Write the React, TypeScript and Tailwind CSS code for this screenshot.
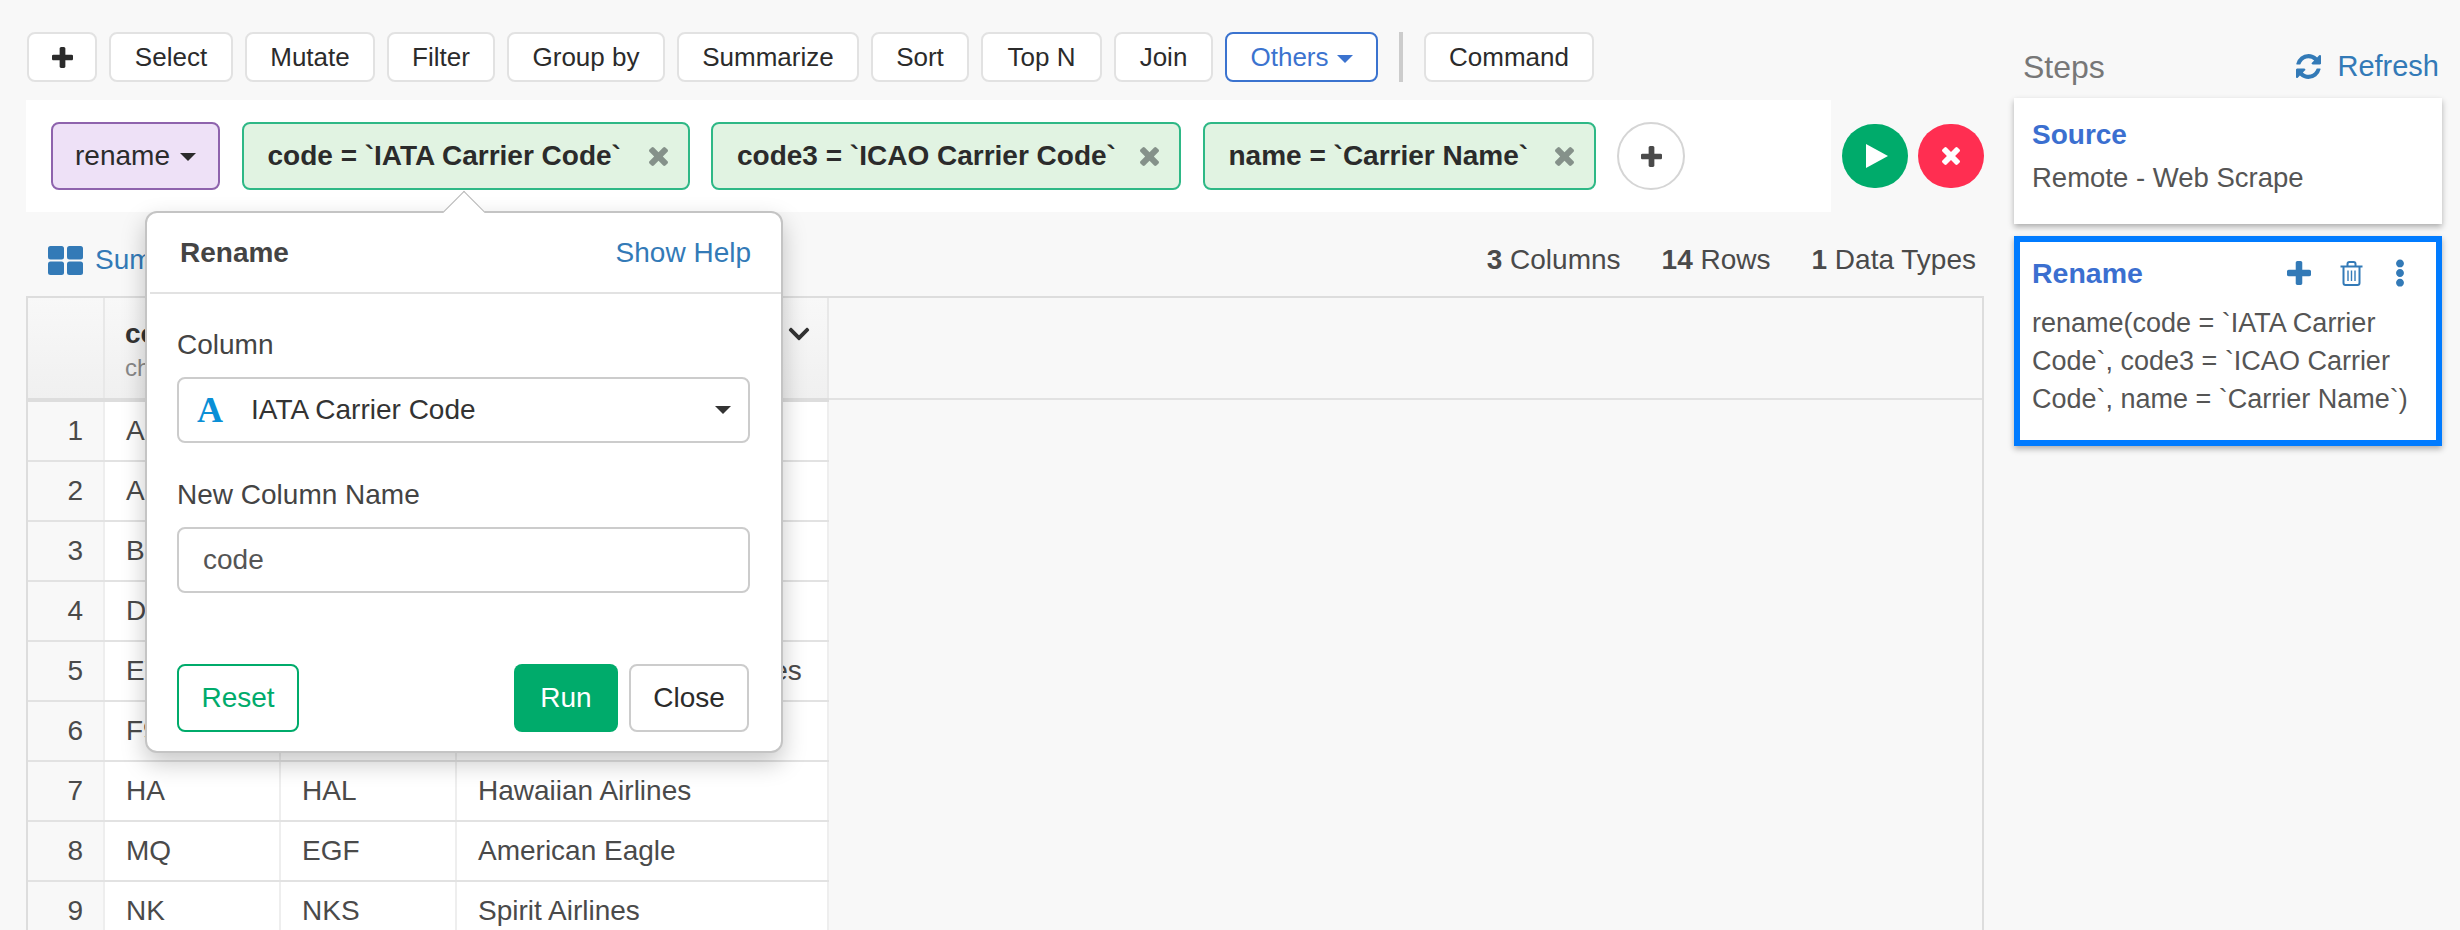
import { FaChevronDown, FaEllipsisV } from 'react-icons/fa'

const tools = [
  { label: 'Select', width: 'w-[124px]' },
  { label: 'Mutate', width: 'w-[130px]' },
  { label: 'Filter', width: 'w-[108px]' },
  { label: 'Group by', width: 'w-[158px]' },
  { label: 'Summarize', width: 'w-[182px]' },
  { label: 'Sort', width: 'w-[98px]' },
  { label: 'Top N', width: 'w-[121px]' },
  { label: 'Join', width: 'w-[99px]' },
]

const chips = [
  { text: 'code = `IATA Carrier Code`', width: 'w-[448px]' },
  { text: 'code3 = `ICAO Carrier Code`', width: 'w-[470px]' },
  { text: 'name = `Carrier Name`', width: 'w-[393px]' },
]

const rows = [
  ['1', 'AA', 'AAL', 'American Airlines'],
  ['2', 'AS', 'ASA', 'Alaska Airlines'],
  ['3', 'B6', 'JBU', 'JetBlue Airways'],
  ['4', 'DL', 'DAL', 'Delta Air Lines'],
  ['5', 'EV', 'ASQ', 'Atlantic Southeast Airlines'],
  ['6', 'F9', 'FFT', 'Frontier Airlines'],
  ['7', 'HA', 'HAL', 'Hawaiian Airlines'],
  ['8', 'MQ', 'EGF', 'American Eagle'],
  ['9', 'NK', 'NKS', 'Spirit Airlines'],
]

function PlusIcon({ className = '' }: { className?: string }) {
  return (
    <svg viewBox="192 128 1408 1408" fill="currentColor" className={className}>
      <path d="M1600 736v192q0 40-28 68t-68 28h-416v416q0 40-28 68t-68 28h-192q-40 0-68-28t-28-68v-416h-416q-40 0-68-28t-28-68v-192q0-40 28-68t68-28h416v-416q0-40 28-68t68-28h192q40 0 68 28t28 68v416h416q40 0 68 28t28 68z" />
    </svg>
  )
}

function TimesIcon({ className = '' }: { className?: string }) {
  return (
    <svg viewBox="302 366 1188 1188" fill="currentColor" className={className}>
      <path d="M1490 1322q0 40-28 68l-136 136q-28 28-68 28t-68-28l-294-294-294 294q-28 28-68 28t-68-28l-136-136q-28-28-28-68t28-68l294-294-294-294q-28-28-28-68t28-68l136-136q28-28 68-28t68 28l294 294 294-294q28-28 68-28t68 28l136 136q28 28 28 68t-28 68l-294 294 294 294q28 28 28 68z" />
    </svg>
  )
}

function RefreshIcon({ className = '' }: { className?: string }) {
  return (
    <svg viewBox="128 128 1536 1536" fill="currentColor" className={className}>
      <path d="M1639 1056q0 5-1 7-64 268-268 434.5t-478 166.5q-146 0-282.5-55t-243.5-157l-129 129q-19 19-45 19t-45-19-19-45v-448q0-26 19-45t45-19h448q26 0 45 19t19 45-19 45l-137 137q71 66 161 102t187 36q134 0 250-65t186-179q11-17 53-117 8-23 30-23h192q13 0 22.5 9.5t9.5 22.5zm25-800v448q0 26-19 45t-45 19h-448q-26 0-45-19t-19-45 19-45l138-138q-148-137-349-137-134 0-250 65t-186 179q-11 17-53 117-8 23-30 23h-199q-13 0-22.5-9.5t-9.5-22.5v-7q65-268 270-434.5t480-166.5q146 0 284 55.5t245 156.5l130-129q19-19 45-19t45 19 19 45z" />
    </svg>
  )
}

function TrashIcon({ className = '' }: { className?: string }) {
  return (
    <svg viewBox="0 0 23 25" fill="none" stroke="currentColor" strokeWidth="2" className={className}>
      <path d="M0.5 5.5h22" />
      <path d="M7.5 5.5V3q0-2 2-2h4q2 0 2 2v2.5" />
      <path d="M3.5 5.5v16.5q0 2 2 2h12q2 0 2-2V5.5" />
      <path d="M8 9.5v10.5M11.5 9.5v10.5M15 9.5v10.5" strokeWidth="1.4" />
    </svg>
  )
}

function GridIcon() {
  return (
    <svg viewBox="0 0 35 29" fill="#337ab7" className="h-[29px] w-[35px]">
      <rect x="0" y="0" width="16" height="13.5" rx="2.5" />
      <rect x="19" y="0" width="16" height="13.5" rx="2.5" />
      <rect x="0" y="15.5" width="16" height="13.5" rx="2.5" />
      <rect x="19" y="15.5" width="16" height="13.5" rx="2.5" />
    </svg>
  )
}

function Caret({ className = '' }: { className?: string }) {
  return <span className={`inline-block border-x-[8px] border-t-[8px] border-x-transparent ${className}`} />
}

function Toolbar() {
  return (
    <div className="flex h-[50px] items-stretch gap-3 pl-px">
      <button className="flex w-[70px] items-center justify-center rounded-lg border-2 border-[#e2e2e2] bg-white text-[#2b2b2b]">
        <PlusIcon className="size-[21px]" />
      </button>
      {tools.map((t) => (
        <button key={t.label} className={`${t.width} rounded-lg border-2 border-[#e2e2e2] bg-white text-[26px] text-[#2b2b2b]`}>
          {t.label}
        </button>
      ))}
      <button className="flex w-[153px] items-center justify-center gap-2 rounded-lg border-2 border-[#3b73cf] bg-white text-[26px] text-[#3b73cf]">
        Others
        <Caret className="mt-1 border-t-[#3b73cf]" />
      </button>
      <div className="mx-[9px] w-1 bg-[#cccccc]" />
      <button className="w-[170px] rounded-lg border-2 border-[#e2e2e2] bg-white text-[26px] text-[#2b2b2b]">Command</button>
    </div>
  )
}

function QueryBar() {
  return (
    <div className="mt-[18px] flex items-center">
      <div className="flex h-28 w-[1805px] items-center gap-[21.5px] bg-white pl-[25px]">
        <div className="flex h-[68px] w-[169px] items-center justify-center gap-2.5 rounded-lg border-2 border-[#8e63ad] bg-[#eee1f7] text-[28px] text-[#2b2b2b]">
          rename
          <Caret className="mt-0.5 border-t-[#2b2b2b]" />
        </div>
        {chips.map((c) => (
          <div key={c.text} className={`${c.width} flex h-[68px] items-center justify-between rounded-lg border-2 border-[#2eb886] bg-[#e1f3e2] pl-[24px] pr-[20px] text-[28px] font-bold text-[#2b2b2b]`}>
            <span>{c.text}</span>
            <TimesIcon className="size-[19px] text-[#85918a]" />
          </div>
        ))}
        <button className="flex size-[68px] items-center justify-center rounded-full border-2 border-[#d5d5d5] bg-white text-[#4a4a4a]">
          <PlusIcon className="size-[21px]" />
        </button>
      </div>
      <div className="ml-[11px] flex gap-2.5">
        <button className="flex h-16 w-[66px] items-center justify-center rounded-full bg-[#00ab6b] pl-1 text-white">
          <svg viewBox="0 0 22 24" fill="currentColor" className="h-6 w-[22px]">
            <path d="M0 0L22 12L0 24Z" />
          </svg>
        </button>
        <button className="flex h-16 w-[66px] items-center justify-center rounded-full bg-[#ff2e51] text-white">
          <TimesIcon className="size-[18px]" />
        </button>
      </div>
    </div>
  )
}

function StatsBar() {
  return (
    <div className="flex h-[84px] items-center justify-between pl-[22px] pr-[8px] pt-3 text-[28px] text-[#4a4a4a]">
      <div className="flex items-center gap-3 text-[#337ab7]">
        <GridIcon />
        <span>Summary</span>
      </div>
      <div className="flex gap-[41px]">
        <span><b>3</b> Columns</span>
        <span><b>14</b> Rows</span>
        <span><b>1</b> Data Types</span>
      </div>
    </div>
  )
}

function DataTable() {
  return (
    <div className="h-[634px] overflow-hidden border-2 border-b-0 border-[#dddddd]">
      <div className="flex">
        <div className="flex h-[104px] w-[801px] border-b-4 border-[#dddddd]">
          <div className="w-[77px] border-r-2 border-[#e8e8e8] bg-gradient-to-b from-[#f8f8f8] to-[#f0f0f0]" />
          <div className="w-[176px] border-r-2 border-[#e8e8e8] bg-gradient-to-b from-[#f8f8f8] to-[#f0f0f0] pl-[20px] pt-[22px] leading-none">
            <div className="text-[28px] font-bold text-[#333333]">code</div>
            <div className="mt-2 text-[24px] text-[#888888]">character</div>
          </div>
          <div className="w-[176px] border-r-2 border-[#e8e8e8] bg-gradient-to-b from-[#f8f8f8] to-[#f0f0f0]" />
          <div className="flex flex-1 justify-end border-r-2 border-[#e8e8e8] bg-gradient-to-b from-[#f8f8f8] to-[#f0f0f0] pr-4 pt-6 text-[#333333]">
            <FaChevronDown size={24} />
          </div>
        </div>
        <div className="h-[102px] flex-1 border-b-2 border-[#e2e2e2]" />
      </div>
      <div className="w-[801px] text-[28px] text-[#4a4a4a]">
        {rows.map((r) => (
          <div key={r[0]} className="flex h-[60px] items-center border-b-2 border-[#e2e2e2] bg-white">
            <div className="flex h-full w-[77px] items-center justify-end border-r-2 border-[#eeeeee] bg-[#f8f8f8] pr-[20px]">{r[0]}</div>
            <div className="flex h-full w-[176px] items-center border-r-2 border-[#eeeeee] pl-[21px]">{r[1]}</div>
            <div className="flex h-full w-[176px] items-center border-r-2 border-[#eeeeee] pl-[21px]">{r[2]}</div>
            <div className="flex h-full flex-1 items-center whitespace-nowrap border-r-2 border-[#eeeeee] pl-[21px]">{r[3]}</div>
          </div>
        ))}
      </div>
    </div>
  )
}

function RenamePopover() {
  return (
    <div className="absolute left-[145px] top-[211px] h-[542px] w-[638px] rounded-xl border-2 border-[#c4c4c4] bg-white text-[#444444] shadow-[0_10px_24px_rgba(0,0,0,0.22)]">
      {/* arrow */}
      <div className="absolute left-[302px] top-[-16px] size-[30px] rotate-45 border-l border-t border-[#b5b5b5] bg-white" />
      <div className="relative ml-[3px] flex h-[81px] items-center justify-between border-b-2 border-[#e2e2e2] pl-[30px] pr-[30px] text-[28px]">
        <span className="font-bold">Rename</span>
        <span className="text-[#337ab7]">Show Help</span>
      </div>
      <div className="pl-[30px] pr-[31px] pt-[34px] text-[28px]">
        <div className="leading-[34px]">Column</div>
        <div className="mt-[15px] flex h-[66px] items-center rounded-lg border-2 border-[#cccccc] pl-[18px] pr-[17px] text-[#333333]">
          <span className="w-[54px] font-['Liberation_Serif',serif] text-[36px] font-bold leading-none text-[#0a8fd6]">A</span>
          <span className="flex-1">IATA Carrier Code</span>
          <Caret className="border-t-[#333333]" />
        </div>
        <div className="mt-[35px] leading-[34px]">New Column Name</div>
        <div className="mt-[15px] flex h-[66px] items-center rounded-lg border-2 border-[#cccccc] pl-[24px] text-[#555555]">code</div>
        <div className="mt-[71px] flex h-[68px] items-stretch">
          <button className="w-[122px] rounded-lg border-2 border-[#00ab6b] text-[#00ab6b]">Reset</button>
          <button className="ml-auto w-[104px] rounded-lg bg-[#00ab6b] text-white">Run</button>
          <button className="ml-[11px] mr-px w-[120px] rounded-lg border-2 border-[#cccccc] text-[#2b2b2b]">Close</button>
        </div>
      </div>
    </div>
  )
}

function StepsPanel() {
  return (
    <div className="ml-[30px] w-[428px] pt-[41px]">
      <div className="flex h-[57px] items-start justify-between pl-[9px] pr-[3px]">
        <span className="text-[32px] leading-[52px] text-[#777777]">Steps</span>
        <span className="flex items-center gap-4 text-[29px] leading-[50px] text-[#337ab7]">
          <RefreshIcon className="size-[25px]" />
          Refresh
        </span>
      </div>
      <div className="h-[126px] bg-white px-[18px] pt-[18px] shadow-[0_3px_6px_rgba(0,0,0,0.3)]">
        <div className="text-[28px] font-bold leading-[38px] text-[#3b6fd0]">Source</div>
        <div className="mt-[5px] text-[27.5px] leading-[38px] text-[#555555]">Remote - Web Scrape</div>
      </div>
      <div className="mt-3 h-[210px] border-[6px] border-[#007bff] bg-white px-3 pt-[12px] shadow-[0_3px_6px_rgba(0,0,0,0.3)]">
        <div className="flex items-center justify-between pr-[14px]">
          <span className="text-[28.5px] font-bold leading-[38px] text-[#3b6fd0]">Rename</span>
          <div className="flex items-center gap-[29px] text-[#337ab7]">
            <PlusIcon className="size-6" />
            <TrashIcon className="h-[25px] w-[23px]" />
            <FaEllipsisV size={28} className="-ml-[6px] -mr-1" />
          </div>
        </div>
        <div className="mt-[13px] text-[27px] leading-[37.8px] text-[#555555]">
          rename(code = `IATA Carrier Code`, code3 = `ICAO Carrier Code`, name = `Carrier Name`)
        </div>
      </div>
    </div>
  )
}

export default function App() {
  return (
    <div className="relative flex h-[930px] w-[2460px] overflow-hidden bg-[#f8f8f8] pl-[26px] font-['Liberation_Sans',Arial,sans-serif]">
      <div className="w-[1958px] pt-[32px]">
        <Toolbar />
        <QueryBar />
        <StatsBar />
        <DataTable />
      </div>
      <StepsPanel />
      <RenamePopover />
    </div>
  )
}
